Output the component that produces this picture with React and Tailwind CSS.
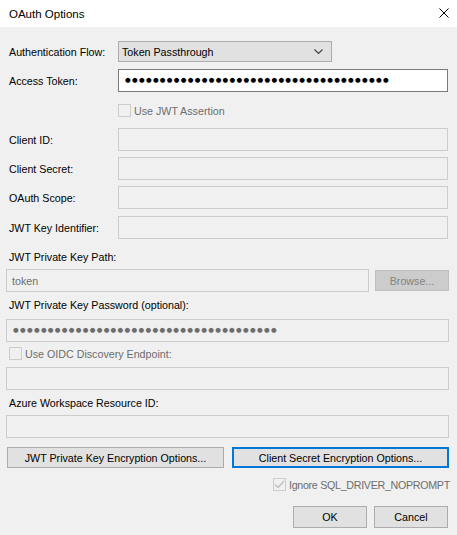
import React from 'react';

const FONT = "font-['Liberation_Sans',Arial,sans-serif]";

function Dots({ count, className }) {
  return (
    <span className={`font-['DejaVu_Sans',sans-serif] text-[6.5px] tracking-[1.3px] leading-none whitespace-nowrap ${className}`}>
      {'●'.repeat(count)}
    </span>
  );
}

function Field({ className = '', children }) {
  return (
    <div className={`h-[23px] shrink-0 border border-[#cccccc] bg-[#f0f0f0] flex items-center px-[5px] ${className}`}>
      {children}
    </div>
  );
}

function Label({ children }) {
  return <span className="w-[118px] shrink-0 pl-[9px] text-black whitespace-nowrap">{children}</span>;
}

function LabeledField({ label, mt }) {
  return (
    <div className={`flex items-center ${mt}`}>
      <Label>{label}</Label>
      <Field className="w-[330px]" />
    </div>
  );
}

function Check({ checked }) {
  return (
    <span className="w-[13px] h-[13px] shrink-0 border border-[#cccccc] bg-[#f0f0f0] flex items-center justify-center">
      {checked && (
        <svg width="11" height="9" viewBox="0 0 11 9">
          <path d="M1 4.5 L4 7.5 L10 1" fill="none" stroke="#bcbcbc" strokeWidth="1.3" />
        </svg>
      )}
    </span>
  );
}

function Button({ children, className = '', focused, disabled }) {
  return (
    <button
      className={`h-[21px] shrink-0 whitespace-nowrap flex items-center justify-center ${
        focused
          ? 'border-2 border-[#0078d7] bg-[#e1e1e1] text-black'
          : disabled
          ? 'border border-[#bfbfbf] bg-[#cccccc] text-[#838383]'
          : 'border border-[#adadad] bg-[#e1e1e1] text-black'
      } ${className}`}
    >
      {children}
    </button>
  );
}

export default function App() {
  return (
    <div className={`w-[457px] h-[535px] bg-[#f0f0f0] text-[10.7px] leading-[14px] ${FONT} overflow-hidden`}>
      {/* title bar */}
      <div className="h-[27px] bg-white flex items-center justify-between pl-[9px] pr-[8px]">
        <span className="text-black text-[11.5px]">OAuth Options</span>
        <svg width="10" height="10" viewBox="0 0 10 10" className="mt-[-1px]">
          <path d="M0.5 0.5 L9.5 9.5 M9.5 0.5 L0.5 9.5" stroke="#000" strokeWidth="1" />
        </svg>
      </div>

      <div className="flex flex-col">
        {/* auth flow */}
        <div className="flex items-center mt-[14px]">
          <Label>Authentication Flow:</Label>
          <div className="w-[214px] h-[21px] shrink-0 border border-[#adadad] bg-[#e1e1e1] flex items-center justify-between pl-[3px] pr-[8px]">
            <span>Token Passthrough</span>
            <svg width="9" height="5" viewBox="0 0 9 5">
              <path d="M0.5 0.5 L4.5 4.5 L8.5 0.5" fill="none" stroke="#404040" strokeWidth="1.1" />
            </svg>
          </div>
        </div>

        {/* access token */}
        <div className="flex items-center mt-[7px]">
          <Label>Access Token:</Label>
          <div className="w-[330px] h-[23px] shrink-0 border border-[#7a7a7a] bg-white flex items-center pl-[6px]">
            <Dots count={38} className="text-black" />
          </div>
        </div>

        {/* use jwt assertion */}
        <div className="flex items-center mt-[12px] pl-[118px] h-[13px]">
          <Check />
          <span className="ml-[3px] text-[#6d6d6d] whitespace-nowrap">Use JWT Assertion</span>
        </div>

        <LabeledField label="Client ID:" mt="mt-[11px]" />
        <LabeledField label="Client Secret:" mt="mt-[6px]" />
        <LabeledField label="OAuth Scope:" mt="mt-[6px]" />
        <LabeledField label="JWT Key Identifier:" mt="mt-[7px]" />

        <span className="mt-[11px] pl-[9px] text-black">JWT Private Key Path:</span>
        <div className="flex items-center mt-[5px] pl-[6px] gap-[6px]">
          <Field className="w-[363px]">
            <span className="text-[#6d6d6d]">token</span>
          </Field>
          <Button disabled className="w-[74px]">Browse...</Button>
        </div>

        <span className="mt-[6px] pl-[9px] text-black">JWT Private Key Password (optional):</span>
        <div className="mt-[7px] pl-[6px]">
          <Field className="w-[443px]">
            <Dots count={38} className="text-[#6d6d6d] ml-[1px]" />
          </Field>
        </div>

        <div className="flex items-center mt-[5px] pl-[9px] h-[13px]">
          <Check />
          <span className="ml-[3px] text-[#6d6d6d] whitespace-nowrap">Use OIDC Discovery Endpoint:</span>
        </div>
        <div className="mt-[7px] pl-[6px]">
          <Field className="w-[443px]" />
        </div>

        <span className="mt-[6px] pl-[9px] text-black">Azure Workspace Resource ID:</span>
        <div className="mt-[5px] pl-[6px]">
          <Field className="w-[443px]" />
        </div>

        <div className="flex mt-[9px] pl-[7px] gap-[8px]">
          <Button className="w-[217px]">JWT Private Key Encryption Options...</Button>
          <Button focused className="w-[217px]">Client Secret Encryption Options...</Button>
        </div>

        <div className="flex items-center mt-[10px] pl-[273px] h-[13px]">
          <Check checked />
          <span className="ml-[3px] text-[#6d6d6d] whitespace-nowrap tracking-[-0.3px]">Ignore SQL_DRIVER_NOPROMPT</span>
        </div>

        <div className="flex justify-end mt-[15px] pr-[9px] gap-[7px]">
          <Button className="w-[74px] !h-[22px]">OK</Button>
          <Button className="w-[74px] !h-[22px]">Cancel</Button>
        </div>
      </div>
    </div>
  );
}
